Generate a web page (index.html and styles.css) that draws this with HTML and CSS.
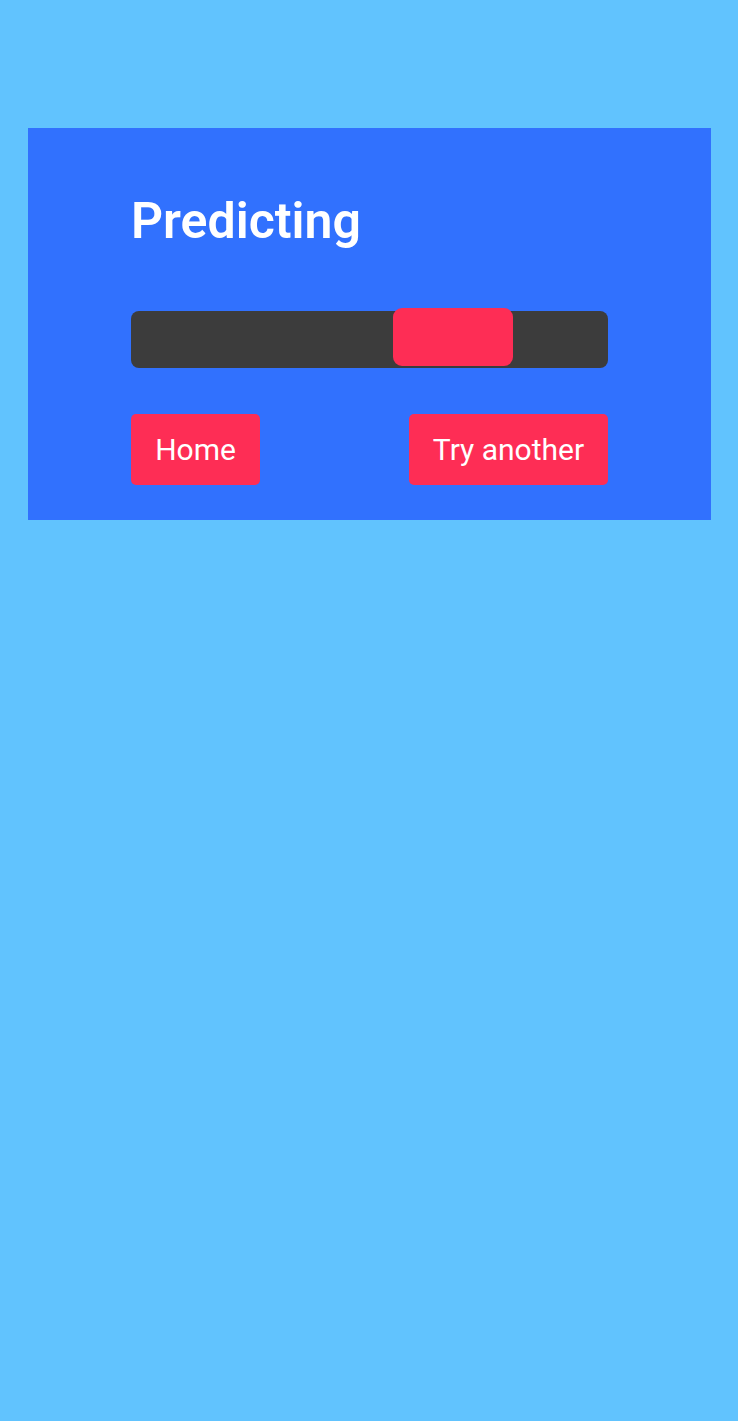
FILE: index.html
```html
<!DOCTYPE html>
<html lang="en">
<head>
<meta charset="utf-8">
<title>Predicting</title>
<link rel="stylesheet" href="styles.css">
</head>
<body>
<main class="card">
  <h1 class="title">Predicting</h1>
  <div class="track">
    <div class="thumb"></div>
  </div>
  <div class="actions">
    <button class="btn">Home</button>
    <button class="btn">Try another</button>
  </div>
</main>
</body>
</html>
```

FILE: styles.css
```css
html, body {
  margin: 0;
  padding: 0;
  background: #61c3fe;
  min-height: 100%;
}
body {
  padding-top: 128px;
  font-family: Roboto, "Noto Sans", sans-serif;
}
.card {
  margin-left: 28px;
  width: 683px;
  box-sizing: border-box;
  background: #3171fe;
  padding: 0 103px 35px 103px;
  display: flex;
  flex-direction: column;
}
.title {
  margin: 63px 0 0 0;
  font-size: 50px;
  font-weight: 600;
  color: #ffffff;
  line-height: 60px;
}
.track {
  position: relative;
  margin-top: 60px;
  height: 57px;
  border-radius: 8px;
  background: #3c3c3c;
}
.thumb {
  position: absolute;
  left: 262px;
  top: -3px;
  width: 120px;
  height: 58px;
  border-radius: 9px;
  background: #fe2d55;
}
.actions {
  margin-top: 46px;
  display: flex;
  justify-content: space-between;
}
.btn {
  height: 71px;
  border: none;
  border-radius: 5px;
  background: #fe2d55;
  color: #ffffff;
  font-family: Roboto, "Noto Sans", sans-serif;
  font-size: 30px;
  font-weight: 400;
  padding: 0;
}
.btn:first-child {
  width: 129px;
}
.btn:last-child {
  width: 199px;
}
```
